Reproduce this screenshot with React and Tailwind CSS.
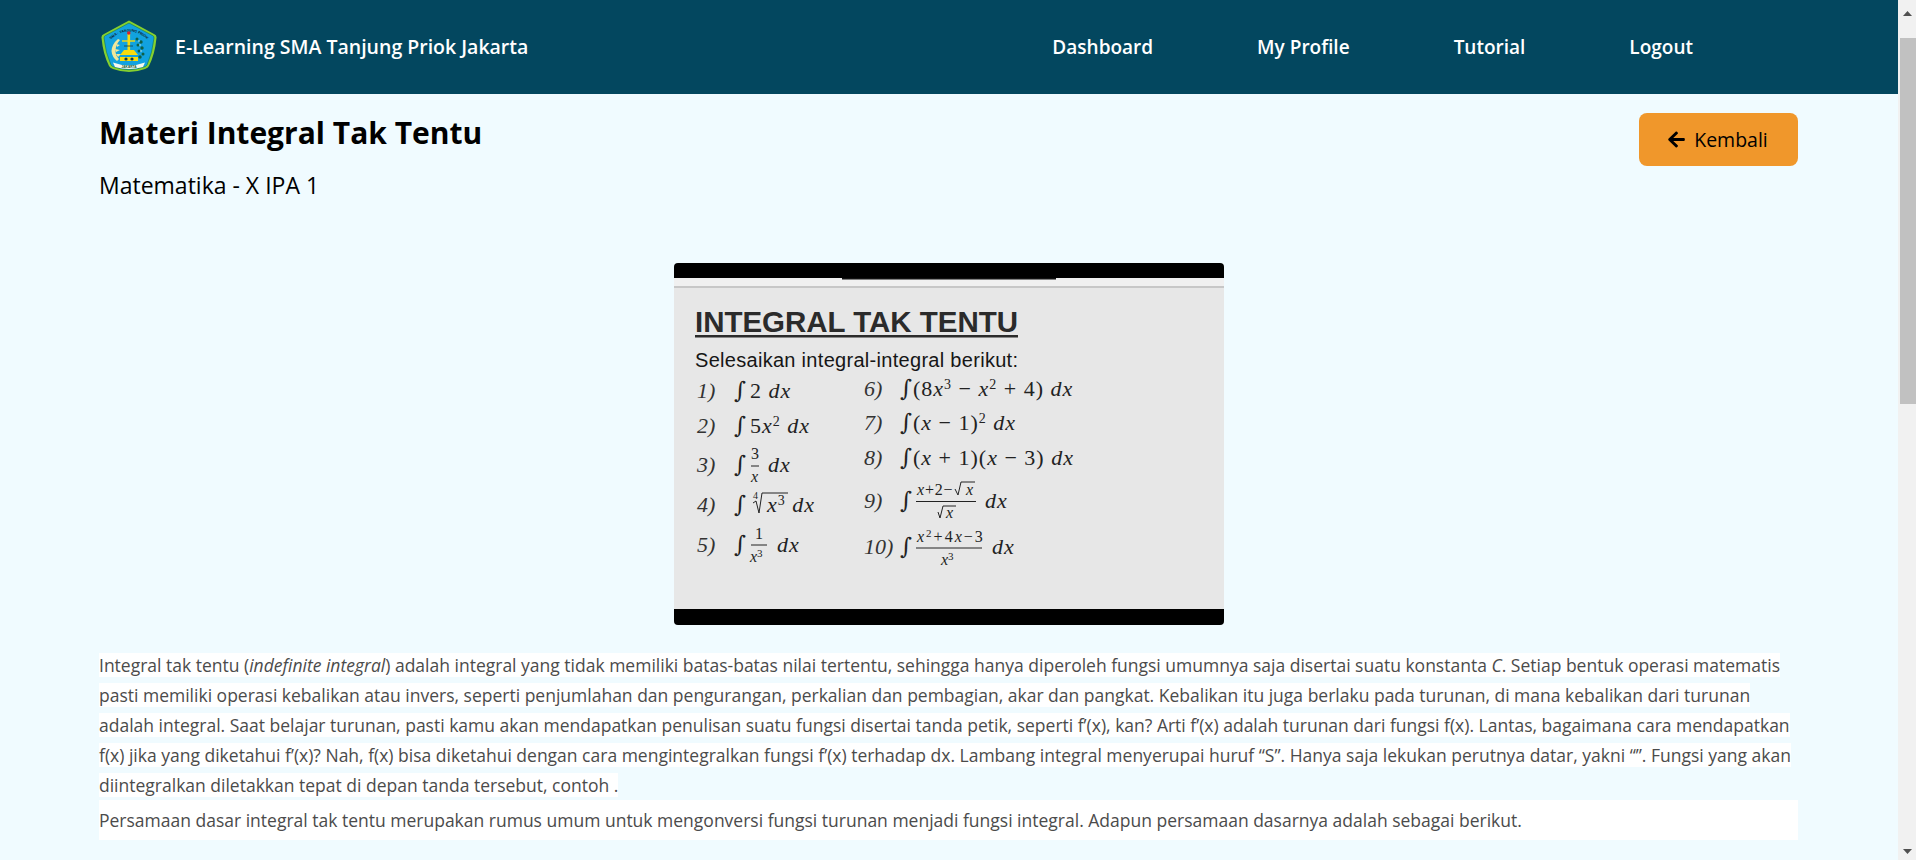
import { FaArrowLeft } from 'react-icons/fa';

const NAV = ['Dashboard', 'My Profile', 'Tutorial', 'Logout'];

function Logo() {
  return (
    <svg width="56" height="54" viewBox="0 0 56 54" className="shrink-0">
      <path d="M28 0.500 Q42 8 53 14 Q56 15 55.500 18 Q54 34 48 46 Q47 48 44 49 Q28 55 12 49 Q9 48 8 46 Q2 34 0.500 18 Q0 15 3 14 Q14 8 28 0.500 Z" fill="#86d02f" />
      <path d="M28 3 Q41 10 51.500 15.500 Q53 16 53 18 Q51.500 33 46 45 Q45 46.500 43 47 Q28 52.500 13 47 Q11 46.500 10 45 Q4.500 33 3 18 Q3 16 4.500 15.500 Q15 10 28 3 Z" fill="#12a2df" stroke="#0d6a3a" strokeWidth="0.500" />
      <path id="logoArc" d="M8 21 Q28 2 48 21" fill="none" />
      <text fontSize="3.600" fontWeight="700" fill="#0c2330" fontFamily="Liberation Sans, sans-serif">
        <textPath href="#logoArc" startOffset="5%">SMA · TANJUNG PRIOK</textPath>
      </text>
      <g fill="#f3e79a">
        <path d="M17 19 Q11 24 10.500 31 Q11 37 16 41 L18 39 Q14 35 14.500 30 Q15 24 19 20 Z" />
        <path d="M15 24 l4 1 l-3 2 Z M14 29 l5 1 l-4 2 Z M15 34 l5 0 l-3 3 Z" />
      </g>
      <rect x="26.500" y="14" width="2.600" height="16" fill="#f8dc0e" />
      <circle cx="27.800" cy="13" r="1.800" fill="#d8232a" />
      <path d="M21 21 H34" stroke="#f8dc0e" strokeWidth="1.400" />
      <path d="M23 26 H32" stroke="#123a4a" strokeWidth="0.800" />
      <path d="M19 35 H37 L33 30 H23 Z" fill="#f8dc0e" />
      <path d="M19 37 H37 V41 H19 Z" fill="#f8dc0e" />
      <circle cx="25" cy="39" r="1.600" fill="#123a4a" />
      <circle cx="31" cy="39" r="1.600" fill="#123a4a" />
      <g fill="#0f5f45">
        <circle cx="36" cy="19" r="1.500" /><circle cx="40" cy="22" r="1.700" /><circle cx="37" cy="25" r="1.500" />
        <circle cx="41" cy="28" r="1.700" /><circle cx="38" cy="31" r="1.500" /><circle cx="42" cy="34" r="1.500" />
        <circle cx="39" cy="37" r="1.700" />
      </g>
      <g fill="#e8f7f2">
        <circle cx="39" cy="25" r="0.700" /><circle cx="40" cy="31" r="0.700" /><circle cx="38" cy="21" r="0.700" />
      </g>
      <path d="M12 42.500 Q28 48.500 44 42.500 L42 47 Q28 51 14 47 Z" fill="#f6f9ee" />
      <text x="28" y="47.800" textAnchor="middle" fontSize="3.200" fontWeight="700" fill="#1c5a3a" fontFamily="Liberation Sans, sans-serif">JAKARTA</text>
    </svg>
  );
}

function Thumbnail() {
  const serif = 'Liberation Serif, serif';
  const x = <tspan fontStyle="italic">x</tspan>;
  const dx = <tspan fontStyle="italic">dx</tspan>;
  const sup = n => <tspan baselineShift="7" fontSize="14">{n}</tspan>;
  const small = n => <tspan baselineShift="5" fontSize="11">{n}</tspan>;
  const num = (label, px, py) => (
    <text x={px} y={py} fontFamily={serif} fontStyle="italic" fontSize="22" fill="#333">{label}</text>
  );
  const int = (px, py) => (
    <text x={px} y={py} fontFamily="DejaVu Serif, serif" fontSize="23" fill="#222">∫</text>
  );
  const rule = (x1, x2, y) => <path d={`M${x1} ${y} H${x2}`} stroke="#222" strokeWidth="1" />;
  return (
    <svg viewBox="0 0 550 362" width="550" height="362" className="rounded block">
      <rect width="550" height="362" fill="#e7e7e7" />
      <rect width="550" height="15" fill="#000" />
      <rect y="15" width="550" height="8" fill="#f0f0f0" />
      <rect x="168" y="15" width="214" height="1.500" fill="#111" />
      <rect y="23.500" width="550" height="1" fill="#a8a8a8" />
      <rect y="346" width="550" height="16" fill="#000" />

      <text x="21" y="69" fontFamily="Liberation Sans, sans-serif" fontWeight="700" fontSize="29.500" fill="#2b2b2b" textLength="323">INTEGRAL TAK TENTU</text>
      <rect x="21" y="72" width="323" height="2.500" fill="#2b2b2b" />
      <text x="21" y="104" fontFamily="Liberation Sans, sans-serif" fontSize="20" fill="#161616" textLength="323">Selesaikan integral-integral berikut:</text>

      {num('1)', 23, 135)}{num('2)', 23, 170)}{num('3)', 23, 209)}{num('4)', 23, 249)}{num('5)', 23, 289)}
      {num('6)', 190, 133)}{num('7)', 190, 167)}{num('8)', 190, 202)}{num('9)', 190, 245)}{num('10)', 190, 291)}
      {int(60, 135)}{int(60, 170)}{int(60, 209)}{int(60, 249)}{int(60, 289)}
      {int(226, 133)}{int(226, 167)}{int(226, 202)}{int(226, 245)}{int(226, 291)}

      <g fontFamily={serif} fontSize="22" fill="#222" letterSpacing="1">
        <text x="76" y="135">2 {dx}</text>
        <text x="76" y="170">5{x}{sup('2')} {dx}</text>
        <text x="94" y="209">{dx}</text>
        <text x="93" y="249">{x}{sup('3')} {dx}</text>
        <text x="103" y="289">{dx}</text>
        <text x="239" y="133">(8{x}{sup('3')} − {x}{sup('2')} + 4) {dx}</text>
        <text x="239" y="167">({x} − 1){sup('2')} {dx}</text>
        <text x="239" y="202">({x} + 1)({x} − 3) {dx}</text>
        <text x="311" y="245">{dx}</text>
        <text x="318" y="291">{dx}</text>
      </g>

      <g fontFamily={serif} fontSize="16" fill="#222">
        <text x="77" y="196">3</text>
        <text x="77" y="219" fontStyle="italic">x</text>
        <text x="81" y="276">1</text>
        <text x="76" y="299">{x}{small('3')}</text>
        <text x="243" y="232" letterSpacing="0.800">{x}+2−</text>
        <text x="292" y="232" fontStyle="italic">x</text>
        <text x="272" y="255" fontStyle="italic">x</text>
        <text x="243" y="279" letterSpacing="2">{x}{small('2')}+4{x}−3</text>
        <text x="267" y="302">{x}{small('3')}</text>
        <text x="79" y="236" fontSize="10">4</text>
      </g>

      <g fill="none" stroke="#222" strokeWidth="1">
        {rule(77, 85, 203)}
        {rule(77, 93, 282)}
        {rule(242, 302, 238.500)}
        {rule(242, 308, 285)}
        <path d="M79 240 L82 238 L85 250 L88 230 H114" />
        <path d="M281 226 L284 232 L287 219 H301" />
        <path d="M264 249 L266 255 L269 243 H282" />
      </g>
    </svg>
  );
}

function Scrollbar() {
  return (
    <aside className="w-[18px] shrink-0 bg-[#f1f1f1] flex flex-col items-end">
      <div className="h-[38px] w-full flex items-center justify-center pb-[12px]">
        <svg width="9" height="5" viewBox="0 0 9 5"><path d="M4.500 0 L9 5 H0 Z" fill="#505050" /></svg>
      </div>
      <div className="h-[366px] w-[16px] bg-[#c1c1c1]" />
      <div className="flex-1" />
      <div className="h-[17px] w-full flex items-center justify-center">
        <svg width="9" height="5" viewBox="0 0 9 5"><path d="M4.500 5 L9 0 H0 Z" fill="#505050" /></svg>
      </div>
    </aside>
  );
}

export default function App() {
  return (
    <div className="h-[860px] overflow-hidden flex bg-[#f0fbff] font-['Open_Sans',sans-serif]">
      <div className="flex-1 min-w-0">
        <header className="h-[94px] bg-[#03475f] pl-[101px] pr-[153px] flex items-center justify-between">
          <div className="flex items-center gap-[18px]">
            <Logo />
            <span className="text-white text-[19.500px] font-semibold">E-Learning SMA Tanjung Priok Jakarta</span>
          </div>
          <nav className="flex">
            {NAV.map(item => (
              <a key={item} className="px-[52px] text-white text-[19px] font-semibold">{item}</a>
            ))}
          </nav>
        </header>

        <main className="pl-[99px] pr-[100px]">
          <div className="flex justify-between items-start pt-[19px]">
            <div>
              <h1 className="text-[30px] leading-[40px] font-bold text-black">Materi Integral Tak Tentu</h1>
              <p className="text-[23px] leading-[34px] text-black mt-[15px]">Matematika - X IPA 1</p>
            </div>
            <button className="w-[159px] h-[53px] bg-[#f0972b] rounded-lg text-black text-[19.500px] font-medium flex items-center justify-center gap-[8px] pr-[2px]">
              <FaArrowLeft className="text-[19px]" />
              Kembali
            </button>
          </div>

          <div className="flex justify-center pt-[61px]">
            <Thumbnail />
          </div>

          <div className="mt-[25px] text-[17.500px] leading-[30px] text-[#4b4b4b]">
            <p>
              <span className="bg-white">
                Integral tak tentu (<em>indefinite integral</em>) adalah integral yang tidak memiliki batas-batas nilai tertentu, sehingga hanya diperoleh fungsi umumnya saja disertai suatu konstanta <em>C</em>. Setiap bentuk operasi matematis pasti memiliki operasi kebalikan atau invers, seperti penjumlahan dan pengurangan, perkalian dan pembagian, akar dan pangkat. Kebalikan itu juga berlaku pada turunan, di mana kebalikan dari turunan adalah integral. Saat belajar turunan, pasti kamu akan mendapatkan penulisan suatu fungsi disertai tanda petik, seperti f’(x), kan? Arti f’(x) adalah turunan dari fungsi f(x). Lantas, bagaimana cara mendapatkan f(x) jika yang diketahui f’(x)? Nah, f(x) bisa diketahui dengan cara mengintegralkan fungsi f’(x) terhadap dx. Lambang integral menyerupai huruf “S”. Hanya saja lekukan perutnya datar, yakni “”. Fungsi yang akan diintegralkan diletakkan tepat di depan tanda tersebut, contoh .
              </span>
            </p>
            <p className="bg-white h-[40px] leading-[40px]">
              Persamaan dasar integral tak tentu merupakan rumus umum untuk mengonversi fungsi turunan menjadi fungsi integral. Adapun persamaan dasarnya adalah sebagai berikut.
            </p>
          </div>
        </main>
      </div>
      <Scrollbar />
    </div>
  );
}
